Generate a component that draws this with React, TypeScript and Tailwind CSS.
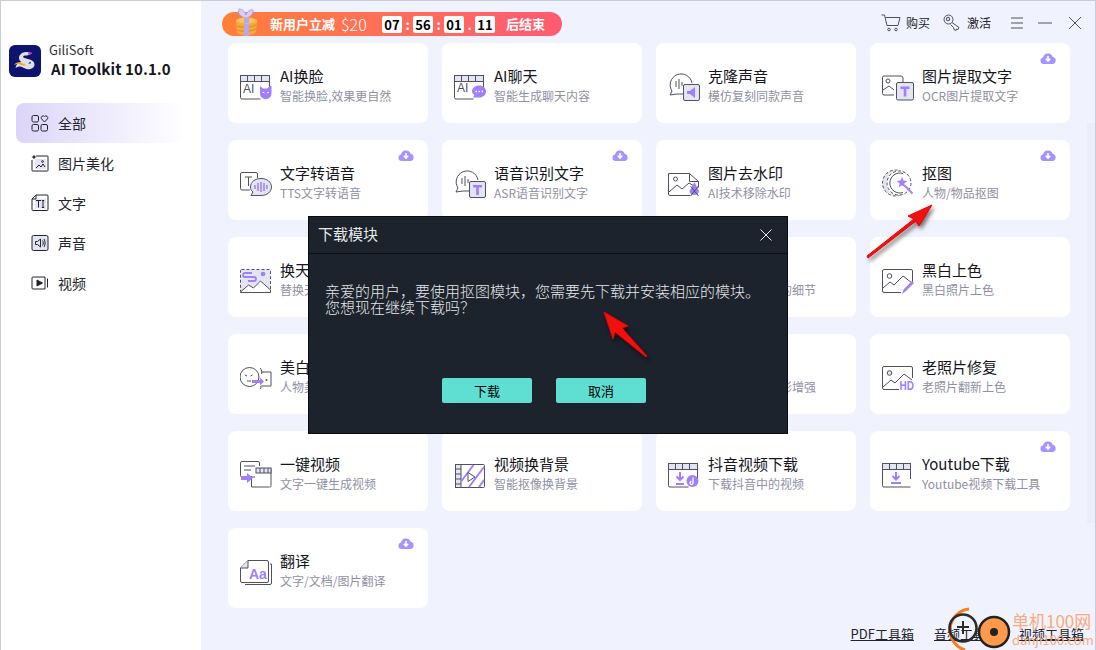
import type { ReactNode } from 'react';

const S = '#50505f';
const P = '#a07efc';
const L = '#e3e6f2';

function Ico({ children, size = 32 }: { children: ReactNode; size?: number }) {
  return (
    <svg width={size} height={size} viewBox={`0 0 ${size} ${size}`} fill="none" stroke={S} strokeWidth="1" className="shrink-0">
      {children}
    </svg>
  );
}

// film frame with header strip, used by several tool icons
const Film = ({ x = 0.5, y = 4.5, w = 29, h = 23.5, cut = 0 }) => (
  <>
    <path d={`M${x + w - cut} ${y + h}H${x + 1.5}a1.5 1.5 0 0 1-1.5-1.5V${y}h${w}v${h - 8}`} />
    <rect x={x} y={y} width={w} height="6" fill={L} />
    <path d={`M${x + 7} ${y}v6M${x + 14} ${y}v6M${x + 21} ${y}v6`} />
  </>
);

const BubbleTile = ({ children }: { children: ReactNode }) => (
  <>
    <path d="M16 23H9l-7 1 2-4A11 11 0 1 1 24 12" />
    <path d="M8 10v6M11 8v10M14 11v4" />
    <rect x="15.5" y="13.5" width="16" height="16" rx="1.5" fill={L} />
    {children}
  </>
);

const TLetter = ({ x = 19, y = 17 }: { x?: number; y?: number }) => (
  <path d={`M${x} ${y}h9v2.4h-3.2V${y + 10}h-2.6V${y + 2.4}H${x}z`} fill={P} stroke="none" />
);

const icons: Record<string, ReactNode> = {
  face: (
    <Ico>
      <Film cut={9} />
      <text x="3" y="22" fontSize="12" fontFamily="Liberation Sans" fill={S} stroke="none">AI</text>
      <path d="M20 15l3 2.5h4l3-2.5 1.5 0v7.5a5.7 5.7 0 0 1-11.5 0z" fill={P} stroke="none" />
      <path d="M22.5 21l2 1M29 21l-2 1" stroke="#fff" />
    </Ico>
  ),
  chat: (
    <Ico>
      <Film cut={10} />
      <text x="3" y="21" fontSize="12" fontFamily="Liberation Sans" fill={S} stroke="none">AI</text>
      <path d="M25 14.5c4 0 7 2.6 7 6s-3 6-7 6h-6l1.5-2.4c-1.300-1-2.500-2-2.500-3.600 0-3.400 3-6 7-6z" fill={P} stroke="none" />
      <path d="M21.500 20.500h1.500M24.500 20.500h1.500M27.500 20.500h1.500" stroke="#fff" strokeWidth="1.600" />
    </Ico>
  ),
  clone: (
    <Ico>
      <BubbleTile>
        <path d="M19 20h3l5-4v11l-5-4h-3z" fill={P} stroke="none" />
      </BubbleTile>
    </Ico>
  ),
  ocr: (
    <Ico>
      <path d="M12 24H2a1.500 1.500 0 0 1-1.500-1.500v-16A1.500 1.500 0 0 1 2 5h17a2 2 0 0 1 2 2v4" />
      <circle cx="6" cy="10" r="2" />
      <path d="M1 19l6-4 5 4" />
      <rect x="14.500" y="11.500" width="17" height="17.500" rx="1.500" fill={L} />
      <TLetter x={18.500} y={15.500} />
    </Ico>
  ),
  tts: (
    <Ico>
      <path d="M10 22H2a1.500 1.500 0 0 1-1.500-1.500V6A1.500 1.500 0 0 1 2 4.500h14A1.500 1.500 0 0 1 17.500 6v4" />
      <path d="M5 9h7M8.500 9v9" />
      <path d="M21 10.500c6 0 10.500 3.600 10.500 8.500s-4.500 8.500-10.500 8.500H11l2-3.500c-2-1.500-2.500-3-2.500-5 0-4.900 4.500-8.500 10.500-8.500z" fill={L} />
      <path d="M15 17v4M18 15v8M21 14v10M24 15v8M27 17v4" stroke={P} strokeWidth="1.500" />
    </Ico>
  ),
  asr: (
    <Ico>
      <BubbleTile>
        <TLetter />
      </BubbleTile>
    </Ico>
  ),
  mark: (
    <Ico>
      <path d="M22 27.500H2A1.500 1.500 0 0 1 .5 26V5.500h21l9 8v6" />
      <path d="M21.500 5.500v8h9" />
      <circle cx="7.500" cy="11" r="2" />
      <path d="M1 24l8-7 5 4 7-6 5 3" />
      <path d="M26.500 14l4.500 9a4.800 4.800 0 0 1-9.500 0z" fill={P} stroke="none" />
      <path d="M22.500 18l8 10M30.500 18l-8 10" stroke={S} />
    </Ico>
  ),
  cutout: (
    <Ico>
      <circle cx="13.500" cy="15" r="13" strokeDasharray="3 2" fill={L} />
      <circle cx="17" cy="15" r="12.500" fill="#fff" stroke="none" />
      <circle cx="17" cy="15" r="12" strokeDasharray="3 2" />
      <path d="M21 5.500A10 10 0 1 0 21 24.500" />
      <path d="M20 9l1.400 3.600 3.800.300-2.900 2.500.900 3.800-3.200-2-3.200 2 .900-3.800-2.900-2.500 3.800-.300z" fill={P} stroke="none" />
      <path d="M22.500 17.500l8 8" stroke={P} strokeWidth="2" />
    </Ico>
  ),
  sky: (
    <Ico>
      <rect x="0.500" y="4.500" width="30" height="23" rx="1" fill={L} strokeDasharray="3 2" />
      <path d="M.5 27l8-7 5 3 7-7 10 9v2.500H.5z" fill="#fff" />
      <path d="M12 8H5a2 2 0 0 0 0 4h9a2 2 0 0 1 0 4H8" stroke={P} strokeWidth="1.800" />
      <circle cx="23" cy="9" r="2.300" fill={P} stroke="none" />
    </Ico>
  ),
  bw: (
    <Ico>
      <path d="M19 27.500H2A1.500 1.500 0 0 1 .5 26V6A1.500 1.500 0 0 1 2 4.500h27A1.500 1.500 0 0 1 30.500 6v11" />
      <circle cx="7.500" cy="11" r="2.300" />
      <path d="M1 23l7-6 4 3 9-9 9 7" />
      <path d="M20 29l2-5 8-8 2 2-8 8z" fill={P} stroke="none" />
    </Ico>
  ),
  beauty: (
    <Ico>
      <circle cx="9.500" cy="15" r="9.500" />
      <path d="M5 13l2 1M10.500 14l2-1M7 19h4" />
      <path d="M14 21v-3h8v-2.500l4 4-4 4V21z" fill={P} stroke="none" transform="translate(-2 0)" />
      <path d="M20 6c2 2 2 4 1.500 6M20 27c1-1 1-2 .5-3" />
      <path d="M21 10h10v14H21" />
      <circle cx="26.500" cy="18" r="1" fill={S} stroke="none" />
    </Ico>
  ),
  hd: (
    <Ico>
      <path d="M17 27.500H2A1.500 1.500 0 0 1 .5 26V6A1.500 1.500 0 0 1 2 4.500h27A1.500 1.500 0 0 1 30.500 6v10" />
      <circle cx="7.500" cy="11" r="2.300" fill={L} />
      <path d="M1 25l8-7 4 3 9-9 8 6" />
      <text transform="translate(17.500 28) scale(1 1.300)" fontSize="10" fontWeight="700" fontFamily="Liberation Sans" fill={P} stroke="none">HD</text>
    </Ico>
  ),
  video: (
    <Ico>
      <path d="M15 18H2a1.500 1.500 0 0 1-1.500-1.500V4A1.500 1.500 0 0 1 2 2.500h16A1.500 1.500 0 0 1 19.500 4v3" />
      <path d="M4 7h11M4 11h7" />
      <path d="M11.500 17v11h18a1.500 1.500 0 0 0 1.500-1.500V9.500H16" />
      <rect x="16" y="9" width="15" height="5" fill={L} />
      <path d="M20 9v5M24 9v5M28 9v5" />
      <path d="M7 18h6v-3l6 5-6 5v-3H7z" fill={P} stroke="none" transform="translate(-6 -1)" />
    </Ico>
  ),
  bg: (
    <Ico>
      <rect x="1.500" y="5.500" width="29" height="23" rx="1" />
      <rect x="1.500" y="5.500" width="5.500" height="23" fill={L} />
      <path d="M1.500 10h5.500M1.500 15h5.500M1.500 20h5.500M1.500 25h5.500" />
      <path d="M7.500 22l12-16M15 28l15-20M25 28l5-7" stroke={P} strokeWidth="2" />
      <path d="M14 13.500l7 4.500-7 4.500z" fill="#fff" />
    </Ico>
  ),
  douyin: (
    <Ico>
      <Film cut={9} />
      <path d="M12 13v7M8.500 17.500L12 21l3.500-3.500" stroke={P} strokeWidth="2" />
      <path d="M8 25h8" stroke={P} strokeWidth="2" />
      <circle cx="24.500" cy="22" r="6" fill={P} stroke="none" />
      <path d="M25 18.500v5.500a1.500 1.500 0 1 1-1.500-1.500" stroke="#fff" strokeWidth="1.300" />
    </Ico>
  ),
  yt: (
    <Ico>
      <Film w={28} cut={0} />
      <path d="M14 13v7M10.500 17L14 20.500 17.500 17" stroke={P} strokeWidth="2" />
      <path d="M9 24h10" stroke={P} strokeWidth="2" />
    </Ico>
  ),
  translate: (
    <Ico>
      <path d="M30 8h1.500v19a1.500 1.500 0 0 1-1.500 1.500H5" />
      <path d="M8 4.500h19A1.500 1.500 0 0 1 28.500 6v19a1.500 1.500 0 0 1-1.500 1.500H2A1.500 1.500 0 0 1 .5 25V12z" />
      <path d="M8 4.500V12H.5" fill={L} />
      <text x="9" y="22.500" fontSize="14" fontWeight="700" fontFamily="Liberation Sans" fill={P} stroke="none">Aa</text>
    </Ico>
  ),
};

// entries with no icon/title sit fully behind the dialog
const tools: { icon?: string; title?: string; sub?: string; dl?: boolean }[] = [
  { icon: 'face', title: 'AI换脸', sub: '智能换脸,效果更自然' },
  { icon: 'chat', title: 'AI聊天', sub: '智能生成聊天内容' },
  { icon: 'clone', title: '克隆声音', sub: '模仿复刻同款声音' },
  { icon: 'ocr', title: '图片提取文字', sub: 'OCR图片提取文字', dl: true },
  { icon: 'tts', title: '文字转语音', sub: 'TTS文字转语音', dl: true },
  { icon: 'asr', title: '语音识别文字', sub: 'ASR语音识别文字', dl: true },
  { icon: 'mark', title: '图片去水印', sub: 'AI技术移除水印' },
  { icon: 'cutout', title: '抠图', sub: '人物/物品抠图', dl: true },
  { icon: 'sky', title: '换天空', sub: '替换天空背景' },
  {},
  { icon: 'hd', title: '图片增强', sub: '无损放大图片的细节' },
  { icon: 'bw', title: '黑白上色', sub: '黑白照片上色' },
  { icon: 'beauty', title: '美白换妆', sub: '人物美白一键换妆' },
  {},
  { icon: 'yt', title: '视频增强', sub: '视频画质和色彩增强' },
  { icon: 'hd', title: '老照片修复', sub: '老照片翻新上色' },
  { icon: 'video', title: '一键视频', sub: '文字一键生成视频' },
  { icon: 'bg', title: '视频换背景', sub: '智能抠像换背景' },
  { icon: 'douyin', title: '抖音视频下载', sub: '下载抖音中的视频' },
  { icon: 'yt', title: 'Youtube下载', sub: 'Youtube视频下载工具', dl: true },
  { icon: 'translate', title: '翻译', sub: '文字/文档/图片翻译', dl: true },
];

function CloudDl() {
  return (
    <svg width="16" height="12" viewBox="0 0 16 12" className="absolute top-[9px] right-[14px]">
      <path d="M3.500 12A3.300 3.300 0 0 1 3 5.500 5 5 0 0 1 12.600 4.700 3.700 3.700 0 0 1 12.500 12z" fill="#a594fb" />
      <path d="M8 4v4.500M5.800 6.800L8 9l2.200-2.200" stroke="#fff" strokeWidth="1.600" fill="none" />
    </svg>
  );
}

function Card({ icon, title, sub, dl }: { icon?: string; title?: string; sub?: string; dl?: boolean }) {
  return (
    <div className="relative h-20 rounded-[8px] bg-white flex items-center pl-3 pt-2 gap-2">
      {dl && <CloudDl />}
      {icon && icons[icon]}
      {title && (
        <div className="min-w-0 whitespace-nowrap -mt-1">
          <div className="text-[15px] leading-[20px] text-[#15151c]">{title}</div>
          <div className="text-[12px] leading-[18px] mt-px text-[#8f90a4]">{sub}</div>
        </div>
      )}
    </div>
  );
}

const navItems: { label: string; icon: ReactNode }[] = [
  {
    label: '全部',
    icon: (
      <>
        <rect x="1" y="1.500" width="6.500" height="6.500" rx="1.500" />
        <rect x="1" y="10.500" width="6.500" height="6.500" rx="1.500" />
        <rect x="10" y="10.500" width="6.500" height="6.500" rx="1.500" />
        <path d="M13.500 8l-3-3.200a1.900 1.900 0 0 1 3-2.300 1.900 1.900 0 0 1 3 2.300z" />
      </>
    ),
  },
  {
    label: '图片美化',
    icon: (
      <>
        <path d="M5 2h11.500A.500.500 0 0 1 17 2.500v14a.500.500 0 0 1-.500.500h-15a.500.500 0 0 1-.500-.500V6" />
        <path d="M3 .500l.800 1.700 1.700.800-1.700.800L3 5.500l-.800-1.700L.500 3l1.700-.800z" fill="#23232e" stroke="none" />
        <rect x="4" y="5" width="11" height="10" fill="#e3e6f2" stroke="none" />
        <path d="M5 14l3-3 2 2 2-3 2 3" />
        <circle cx="11.500" cy="7.500" r=".9" />
      </>
    ),
  },
  {
    label: '文字',
    icon: (
      <>
        <path d="M5 1h11a1 1 0 0 1 1 1v13.500a1 1 0 0 1-1 1H2a1 1 0 0 1-1-1V5z" />
        <rect x="4" y="4.500" width="11" height="10" fill="#e3e6f2" stroke="none" />
        <path d="M5 1v4H1M5 6.500h5M7.500 6.500v7M12 6.500v7M10.800 6.500h2.400M10.800 13.500h2.400" />
      </>
    ),
  },
  {
    label: '声音',
    icon: (
      <>
        <rect x="1" y="1.500" width="16" height="15" rx="1.500" fill="#e3e6f2" />
        <path d="M4.500 7.500h2l3-2.500v8l-3-2.500h-2z" />
        <path d="M11.500 6.500c1 1.500 1 3.500 0 5M13 5c1.500 2.500 1.500 5.500 0 8" />
      </>
    ),
  },
  {
    label: '视频',
    icon: (
      <>
        <path d="M14 3H2a1 1 0 0 0-1 1v10a1 1 0 0 0 1 1h12z" />
        <path d="M6 6l5.500 3L6 12z" fill="#23232e" />
        <path d="M16.500 4.500v9" />
      </>
    ),
  },
];

function Logo() {
  return (
    <svg width="32" height="32" viewBox="0 0 32 32" className="shrink-0">
      <rect width="32" height="32" rx="6" fill="#0d1470" />
      <path d="M10 13c0-3 3-6 7-6 2.500 0 4 .500 6 1-2 2-5 2.500-7 2.500-1.500 0-2.500 1-1.500 2 2 1.500 11 1.500 11 7 0 4-5 5.500-8 4.500-3-1-5-3-7.500-2.500-1.500.300-2.500 1-3.500 1.500.500-3 2.500-6 6.500-6 3 0 5.500 1.500 7.500 1.500 1.500 0 2-1 .500-1.800C19 21 10 18 10 13z" fill="#dfe0e6" />
      <path d="M5 20c1.500-2 3.500-3 6-2.500 2.500.500 4 2 6.500 2.500-2 1-4.500.500-6.500-.500-2-.800-4-.500-6 .500z" fill="#f6a623" />
      <path d="M19 7.200c1.500.200 3 .500 4.500.800-.800 1-2.500 1.700-4 1.800z" fill="#c531d8" />
    </svg>
  );
}

function Gift() {
  return (
    <svg width="28" height="30" viewBox="0 0 28 30" className="absolute left-[10px] top-[-4px]">
      <path d="M4 13c0-1 20-3 21 0l-1 10c-.500 5-17 6-19 1z" fill="#f6a93b" />
      <path d="M5 18c5 2 14 1.500 19-1M5 22c5 2 14 1.500 19-1" stroke="#e08a22" fill="none" />
      <path d="M12 12l5-.500v16l-5 .500z" fill="#b6a6f5" />
      <path d="M14 10C9 9 5 6 7 1c4 0 6 3 7 6 1-3 4-6 7-5 1 4-3 7-7 8z" fill="#d5cdfb" stroke="#a797ee" strokeWidth=".8" />
      <ellipse cx="14.500" cy="12.500" rx="10.500" ry="3" fill="#fbc35d" />
      <path d="M12 10h5v5h-5z" fill="#b6a6f5" />
    </svg>
  );
}

const Time = ({ v }: { v: string }) => (
  <span className="w-5 h-[17px] rounded-[2px] bg-white text-black text-[13px] font-bold leading-[17px] text-center">{v}</span>
);

const Sep = ({ c }: { c: string }) => <span className="w-[11px] text-center text-white font-bold text-[13px] leading-[17px]">{c}</span>;

export default function App() {
  return (
    <div className="relative w-[1096px] h-[650px] overflow-hidden flex bg-[#f0f3fd] border-t border-l border-r border-[#c9ccd9] text-[#23232e]" style={{ fontFamily: '"Noto Sans CJK SC", "Noto Sans", sans-serif' }}>
      <aside className="w-[200px] shrink-0 bg-white pl-2 pt-[42px]">
        <div className="flex items-center gap-2">
          <Logo />
          <div>
            <div className="text-[13px] leading-[16px] -mt-px text-[#30303c]">GiliSoft</div>
            <div className="text-[15px] leading-[18px] font-bold mt-[2px] ml-0.5 text-[#15151c] tracking-[0.1px]">AI Toolkit 10.1.0</div>
          </div>
        </div>
        <nav className="mt-[25px] ml-[7px]">
          {navItems.map((item, i) => (
            <div key={item.label} className={i === 0 ? 'h-10 w-[170px] flex items-center gap-[9px] pl-[15px] rounded-[8px] bg-gradient-to-r from-[#dcd5f9] to-white' : 'h-10 w-[170px] flex items-center gap-[9px] pl-[15px]'}>
              <svg width="18" height="18" viewBox="0 0 18 18" fill="none" stroke="#23232e" strokeWidth="1" className="shrink-0">
                {item.icon}
              </svg>
              <span className="text-[14px] leading-5">{item.label}</span>
            </div>
          ))}
        </nav>
      </aside>

      <main className="flex-1 min-w-0 flex flex-col">
        <header className="h-[42px] shrink-0 flex items-start pt-[11px] pl-[21px] pr-[13px]">
          <div className="relative w-[340px] h-6 rounded-full bg-gradient-to-r from-[#ff7f37] to-[#ff5a72] flex items-center pl-[48px] text-white">
            <Gift />
            <span className="text-[13px] font-bold leading-6">新用户立减</span>
            <span className="text-[16px] font-light leading-6 ml-[6px] w-[41px]">$20</span>
            <span className="flex items-center">
              <Time v="07" />
              <Sep c=":" />
              <Time v="56" />
              <Sep c=":" />
              <Time v="01" />
              <Sep c="." />
              <Time v="11" />
            </span>
            <span className="text-[13px] font-bold leading-6 ml-[11px]">后结束</span>
          </div>
          <div className="ml-auto flex items-center h-[21px] text-[12px] text-[#23232e]">
            <svg width="20" height="18" viewBox="0 0 20 18" fill="none" stroke="#50505f">
              <path d="M.5 1h3l2.500 10.500h11l2-8H4.500" />
              <circle cx="8" cy="15.500" r="1.300" />
              <circle cx="15" cy="15.500" r="1.300" />
            </svg>
            <span className="ml-[5px]">购买</span>
            <svg width="18" height="18" viewBox="0 0 18 18" fill="none" stroke="#50505f" className="ml-[13px]">
              <circle cx="5.500" cy="5.500" r="4.500" />
              <circle cx="5" cy="5" r="1.800" fill="#d8dbe8" />
              <path d="M9 8.500l7 5-1 2-1.500-.500-.500 1.500-2-1-.500-2-3-3" />
            </svg>
            <span className="ml-[6px]">激活</span>
            <svg width="14" height="12" viewBox="0 0 14 12" stroke="#50505f" className="ml-[19px]">
              <path d="M1 1h12M1 6h12M1 11h12" />
            </svg>
            <svg width="14" height="12" viewBox="0 0 14 12" stroke="#50505f" className="ml-[14px]">
              <path d="M0 6h14" />
            </svg>
            <svg width="14" height="14" viewBox="0 0 14 14" stroke="#50505f" className="ml-4">
              <path d="M1 1l12 12M13 1L1 13" />
            </svg>
          </div>
        </header>

        <section className="pl-[27px] grid grid-cols-[repeat(4,200px)] gap-x-[14px] gap-y-[17px]">
          {tools.map((t, i) => (
            <Card key={i} {...t} />
          ))}
        </section>

        <footer className="mt-auto pb-[7px] pr-[11px] flex justify-end gap-5 text-[13px] leading-[18px] text-[#23232e] underline">
          <span>PDF工具箱</span>
          <span>音频工具箱</span>
          <span>视频工具箱</span>
        </footer>
      </main>

      {/* scrollbar track */}
      <div className="absolute right-0 top-[122px] w-2 h-[400px] bg-[#ebeefa]" />

      {/* download dialog */}
      <div className="absolute left-[307px] top-[215px] w-[480px] h-[218px] bg-[#1c232c] border border-[#090c11] text-[#e6e8ea] flex flex-col">
        <div className="h-[37px] shrink-0 border-b border-[#0b1016] flex items-center justify-between pl-[9px] pr-[14px]">
          <span className="text-[15px] leading-5 -mt-0.5">下载模块</span>
          <svg width="14" height="14" viewBox="0 0 14 14" stroke="#e6e8ea">
            <path d="M1.500 1.500l11 11M12.500 1.500l-11 11" />
          </svg>
        </div>
        <p className="mt-[29px] px-4 text-[15px] leading-[16px] font-light whitespace-nowrap">
          亲爱的用户，要使用抠图模块，您需要先下载并安装相应的模块。
          <br />
          您想现在继续下载吗？
        </p>
        <div className="mt-auto mb-[30px] pr-2 flex justify-center gap-6">
          <button className="w-[90px] h-[25px] rounded-[2px] bg-[#5edfd2] text-black text-[13px]">下载</button>
          <button className="w-[90px] h-[25px] rounded-[2px] bg-[#5edfd2] text-black text-[13px]">取消</button>
        </div>
      </div>

      {/* red annotation arrows */}
      <svg width="1096" height="650" viewBox="0 0 1096 650" className="absolute -left-px -top-px pointer-events-none drop-shadow-[2px_3px_2px_rgba(0,0,0,0.55)]">
        <path d="M867 256l47-37-6-3 24-11-13 21-3-5-48 37z" fill="#f01010" stroke="#e00" strokeLinejoin="round" />
        <path d="M646 357l-31-25-2 7-9-27 24 14-6 2 25 28z" fill="#f01010" stroke="#e00" strokeLinejoin="round" />
      </svg>

      {/* site watermark */}
      <div className="absolute -left-px -top-px w-[1096px] h-[650px] pointer-events-none">
        <svg width="150" height="50" viewBox="0 0 150 50" className="absolute left-[940px] top-[606px]">
          <path d="M29 3A21 21 0 0 0 25 44" stroke="#ff7a1a" strokeWidth="3" fill="none" />
          <circle cx="23" cy="22" r="13.500" stroke="#2b2b2b" strokeWidth="2.500" fill="none" />
          <path d="M23 15v13M17 21h12" stroke="#2b2b2b" strokeWidth="2" />
          <circle cx="54" cy="26" r="15" fill="#ff9a4d" stroke="#222" strokeWidth="2.500" />
          <circle cx="54" cy="26" r="4" fill="#222" />
        </svg>
        <div className="absolute left-[1012px] top-[609px] text-[17px] leading-[24px] text-[#f9ab7d] whitespace-nowrap">单机100网</div>
        <div className="absolute left-[1012px] top-[632px] text-[13px] leading-[16px] text-[#f9ab7d] whitespace-nowrap">danji100.com</div>
      </div>
    </div>
  );
}
